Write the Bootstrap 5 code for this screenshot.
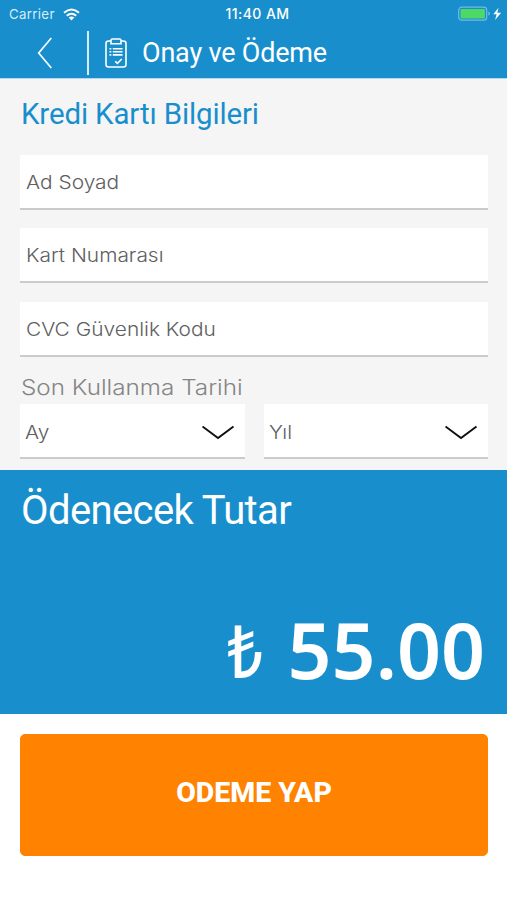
<!DOCTYPE html>
<html lang="tr">
<head>
<meta charset="utf-8">
<meta name="viewport" content="width=device-width, initial-scale=1">
<title>Onay ve Ödeme</title>
<link href="https://cdn.jsdelivr.net/npm/bootstrap@5.3.0/dist/css/bootstrap.min.css" rel="stylesheet">
<style>
  body { font-family: Roboto, sans-serif; background: #fff; }
  svg { display: block; flex: none; }
  .brand-bg { background: #188fcc; color: #fff; }
  .app-header { height: 79px; border-bottom: 1px solid #b4d9ee; }
  .status-bar { height: 28px; padding: 0 5px 0 9px; font: 500 13.3px/27px Inter, sans-serif; }
  .status-bar .carrier { font-weight: 400; color: #d5ecf8; letter-spacing: .3px; }
  .status-bar .clock { font-weight: 500; font-size: 14px; letter-spacing: .45px; padding-left: 4px; }
  .title-bar { height: 50px; padding: 0 0 0 37px; }
  .divider { width: 2px; height: 44px; background: #d9eef9; margin: 0 16px 0 34px; }
  .title-text { font-size: 27px; line-height: 34px; letter-spacing: -.2px; margin-left: 15px; }
  .card-form { height: 391px; background: #f5f5f5; padding: 17px 19px 0 20px; }
  .form-heading { font-size: 29.5px; line-height: 36px; letter-spacing: -.15px; color: #188fcc; margin: 0 0 23px 1px; }
  .field { height: 55px; background: #fff; border-bottom: 2px solid #cbcbcb; padding: 0 6px; color: #606060; font: 350 18.5px/54px Inter, sans-serif; }
  .field + .field { margin-top: 18.4px; }
  .wide-text { display: inline-block; transform: scaleX(1.13); transform-origin: left; }
  .expiry-label { font: 300 21px/28px Inter, sans-serif; color: #858585; margin: 17px 0 2px 1px; }
  .expiry-label .wide-text { transform: scaleX(1.155); }
  .expiry-row { gap: 19px; }
  .expiry-row .field { padding: 3px 6px 0 5px; }
  .amount { height: 244px; padding: 18px 22px 0 21px; }
  .amount-label { font-size: 40px; line-height: 46px; letter-spacing: -.6px; }
  .amount-value { font: 600 77px/90px "Noto Sans", sans-serif; margin-top: 71px; }
  .lira { font-size: 72px; font-weight: 500; transform: scaleX(.87); transform-origin: right; }
  .pay-btn { height: 122px; margin: 20px 19px 0 20px; --bs-btn-bg: #ff8200; --bs-btn-color: #fff; --bs-btn-border-color: #ff8200; border-radius: 5px; font: 800 28.5px/1 Roboto, sans-serif; padding-bottom: 10px; }
</style>
<script src="https://cdn.jsdelivr.net/npm/bootstrap@5.3.0/dist/js/bootstrap.bundle.min.js"></script>
</head>
<body>
<header class="app-header brand-bg">
  <div class="status-bar row g-0 align-items-center">
    <div class="col d-flex align-items-center gap-2"><span class="carrier">Carrier</span>
      <svg width="17" height="13" viewBox="0 0 17 13" fill="none" stroke="#fff" stroke-width="2"><path d="M1 4.8Q8.5-1.8 16 4.8M3.8 7.8Q8.5 3.6 13.2 7.8"/><path d="M5.7 9.6Q8.5 7.2 11.3 9.6L8.5 12.5Z" fill="#fff" stroke="none"/></svg>
    </div>
    <div class="col-auto"><span class="clock">11:40 AM</span></div>
    <div class="col d-flex justify-content-end">
      <svg width="44" height="16" viewBox="0 0 44 16"><rect x=".7" y="1.2" width="28" height="13" rx="3" fill="none" stroke="#74bce1" stroke-width="1.2"/><rect x="2.5" y="3" width="24.4" height="9.4" rx="1" fill="#4cd964"/><path d="M30.3 5.5v4.2q1.6-.7 1.6-2.1T30.3 5.5" fill="#74bce1"/><path d="M40.500 1.700 35.300 8.200h3.300l-1.500 5.700 6-7.100h-3.800z" fill="#fff"/></svg>
    </div>
  </div>
  <div class="title-bar d-flex align-items-center">
    <svg width="16" height="32" viewBox="0 0 16 32" fill="none" stroke="#fff" stroke-width="1.7"><path d="M14.3 1 1.7 16 14.3 31"/></svg>
    <div class="divider"></div>
    <svg width="22" height="30" viewBox="0 0 22 30" fill="none" stroke="#fff" stroke-width="1.6"><rect x="1" y="3" width="20" height="26" rx="2.5"/><path d="M6 5.8V2.4Q6 1 7.4 1H14.6Q16 1 16 2.4V5.8Z" fill="#188fcc"/><path d="M4.5 10.7H6.3M7.8 10.7H17.5M4.5 13.8H6.3M7.8 13.8H17.5M4.5 16.9H6.3M7.8 16.9H17.5M10.2 23.3l2.3 2 4.2-4.3"/></svg>
    <span class="title-text">Onay ve Ödeme</span>
  </div>
</header>
<main>
  <section class="card-form">
    <h1 class="form-heading fw-normal">Kredi Kartı Bilgileri</h1>
    <div class="field"><span class="wide-text">Ad Soyad</span></div>
    <div class="field"><span class="wide-text">Kart Numarası</span></div>
    <div class="field"><span class="wide-text">CVC Güvenlik Kodu</span></div>
    <div class="expiry-label"><span class="wide-text">Son Kullanma Tarihi</span></div>
    <div class="expiry-row d-flex">
      <div class="field m-0 w-50 d-flex justify-content-between align-items-center"><span class="wide-text">Ay</span><svg class="me-1" width="33" height="16" viewBox="0 0 33 16" fill="none" stroke="#111" stroke-width="2"><path d="M.5 2.5 16 14 31.5 2.5"/></svg></div>
      <div class="field m-0 w-50 d-flex justify-content-between align-items-center"><span class="wide-text">Yıl</span><svg class="me-1" width="33" height="16" viewBox="0 0 33 16" fill="none" stroke="#111" stroke-width="2"><path d="M.5 2.5 16 14 31.5 2.5"/></svg></div>
    </div>
  </section>
  <section class="amount brand-bg">
    <div class="amount-label">Ödenecek Tutar</div>
    <div class="amount-value d-flex justify-content-end align-items-center">
      <span class="lira">₺</span><span class="ms-4">55.00</span>
    </div>
  </section>
  <div class="d-grid"><button type="button" class="btn pay-btn">ODEME YAP</button></div>
</main>
</body>
</html>
